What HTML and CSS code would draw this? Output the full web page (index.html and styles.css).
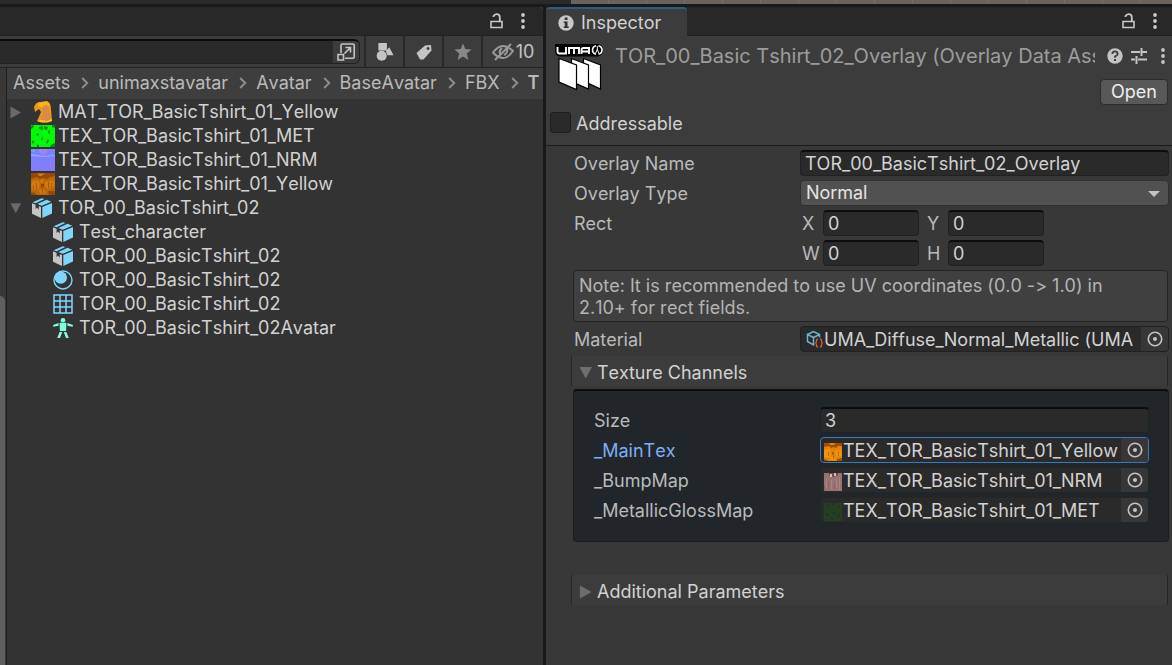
FILE: index.html
```html
<!DOCTYPE html>
<html lang="en">
<head>
  <meta charset="UTF-8">
  <meta name="viewport" content="width=device-width, initial-scale=1.0">
  <title>Unity Editor</title>
  <link rel="stylesheet" href="styles.css">
</head>
<body>
<!-- Shared icons -->
<svg class="sprite" aria-hidden="true">
  <symbol id="i-lock" viewBox="0 0 14 16">
    <path d="M1 8.500h11v6H1z" fill="none" stroke="currentColor" stroke-width="1.600"/>
    <path d="M3.500 4V3.200Q4.500 1.200 6.500 1.200q3.300 0 3.300 3V8" fill="none" stroke="currentColor" stroke-width="1.800"/>
  </symbol>
  <symbol id="i-dots" viewBox="0 0 4 16">
    <circle cx="2" cy="2" r="1.900"/><circle cx="2" cy="8" r="1.900"/><circle cx="2" cy="14" r="1.900"/>
  </symbol>
  <symbol id="i-chevron" viewBox="0 0 8 12">
    <path d="M1.200 1l5 5-5 5" fill="none" stroke="currentColor" stroke-width="2"/>
  </symbol>
  <symbol id="i-right" viewBox="0 0 12 14"><path d="M0 .5v13L11.500 7z"/></symbol>
  <symbol id="i-down" viewBox="0 0 14 12"><path d="M.5 0h12.500L6.700 11.500z"/></symbol>
  <symbol id="i-target" viewBox="0 0 16 16">
    <circle cx="8" cy="8" r="6.700" fill="none" stroke="currentColor" stroke-width="1.600"/>
    <circle cx="8" cy="8" r="2"/>
  </symbol>
  <symbol id="i-model" viewBox="0 0 20 20">
    <path d="M0 5.300l3.600 1.500v4.400l1.300-1.600 1.900 1.900V8l2.200 1v11L0 15.800z" fill="#c4c4c4"/>
    <path d="M10.300 9L20 5v10.600L10.300 20z" fill="#7fd6fd"/>
    <path d="M.7 4.200L9.800.2l2.600.8-8.800 4.200zM5.300 6L14.600 1.700l4.600 2.100-9.500 4z" fill="#7fd6fd"/>
  </symbol>
  <symbol id="i-material" viewBox="0 0 20 20">
    <circle cx="10" cy="10" r="9" fill="none" stroke="#7fd6fd" stroke-width="1.400"/>
    <circle cx="7.800" cy="7.600" r="6.200" fill="#7fd6fd"/>
  </symbol>
  <symbol id="i-mesh" viewBox="0 0 20 20">
    <path d="M1 1h18v18H1zM7 1v18M13 1v18M1 7h18M1 13h18" fill="none" stroke="#7fd6fd" stroke-width="1.500"/>
  </symbol>
  <symbol id="i-avatar" viewBox="0 0 20 20">
    <g fill="#80ffdf">
      <circle cx="10" cy="2.300" r="2.300"/>
      <path d="M6.600 4.800h6.800l-.3 8.200H6.900zM5.600 4.900v2.800L.4 8.800 0 6.900zM14.400 4.900v2.800l5.200 1.100.4-1.900zM6.600 13.900h2.700L7 20H4.200zM13.400 13.900h-2.700L13 20h2.800z"/>
    </g>
  </symbol>
  <symbol id="t-yellow" viewBox="0 0 24 22" preserveAspectRatio="none">
    <path d="M0 0h24v22H0z" fill="#b9660c"/>
    <path d="M0 0h6l2 2h5l1-2h10v3l-5 1-3 2-4-1-3 1-3-2-6 2zM10 11h3v2l-2 2-1-2zM0 19l4 1 2 2H0zM17 18h7v4h-6z" fill="#96480a"/>
    <path d="M1 8l6-1 2 3-1 6-5 1-3-2zM14 9l7-2 3 3-2 5-6 1-2-3zM7 17l6-1 2 4-5 1zM7 1h5l-1 2H8zM10 6l3 1-1 3-3-1z" fill="#d27a0b"/>
    <path d="M5 10h1v6H5zM17 9h1v6h-1zM20 10h1v5h-1zM11 15h1v5h-1zM2 12h1v4H2z" fill="#a85809"/>
  </symbol>
  <symbol id="t-bright" viewBox="0 0 18 18">
    <path d="M0 0h18v18H0z" fill="#e08604"/>
    <path d="M0 0h5l1 2h4l1-2h7v3h-4l-2 2-2-1-3 1-2-2-5 1zM8 9l2 1-1 2-1-1zM0 16l3 1 1 1H0zM13 16l5-1v3h-5z" fill="#a54d07"/>
    <path d="M0 7l6-1 1 4-2 5-5-1zM11 8l6-2 1 7-6 1zM6 14h5l1 3H7z" fill="#f0960a"/>
    <path d="M14 8h1v5h-1zM4 9h1v4H4zM9 12h1v4H9z" fill="#c26a05"/>
  </symbol>
  <symbol id="t-green" viewBox="0 0 24 22" preserveAspectRatio="none">
    <path d="M0 0h24v22H0z" fill="#00fb08"/>
    <path d="M0 1l2-1h1L2 3 0 4zM8 2l3-1 1 2-1 2-3-1zM13 1l4 1-1 3-3-1zM6 8l2 1-1 2-2-1zM17 6l2-1v3l-2 1zM21 0h3v3l-3-1zM2 15l1 2-1 2-1-2zM10 13l1-1 1 2-1 2zM15 17l2-3 1 2-2 3zM6 19l2 1v2H6zM20 20l4-2v4h-5z" fill="#068c0c"/>
  </symbol>
  <symbol id="t-met" viewBox="0 0 18 18">
    <path d="M0 0h18v18H0z" fill="#243f23"/>
    <path d="M2 1l3 1-2 3zM7 0h4L9 3zM14 2l3 1-3 2zM1 10l4 1-2 3zM9 8l3 2-3 2zM13 12l4-2-2 5zM6 14l4 1-2 2z" fill="#1f3520"/>
  </symbol>
  <symbol id="t-normal" viewBox="0 0 24 22" preserveAspectRatio="none">
    <path d="M0 0h24v22H0z" fill="#817efb"/>
    <path d="M0 5l7 1 6 1 11-1v1l-11 1L0 7z" fill="#8fa6fb"/>
    <path d="M8 0h8v4l-3 2-4-2z" fill="#9a88f7"/>
    <path d="M12 1h1v4h-1zM16 0h1v4h-1zM5 13h1v4H5zM19 12h1v6h-1z" fill="#a078ee"/>
    <path d="M0 0h4v3H0zM19 3l3 2-2 2z" fill="#739af3"/>
  </symbol>
  <symbol id="t-bump" viewBox="0 0 18 18">
    <path d="M0 0h18v18H0z" fill="#997272"/>
    <path d="M5 0h9v2l-4 2-5-2z" fill="#6b4849"/>
    <path d="M6 1h2v3H6zM10 0h2v3h-2z" fill="#dcb8b5"/>
    <path d="M2 5h1v10H2zM7 7h1v9H7zM12 6h1v9h-1zM15 4h1v13h-1z" fill="#a88483"/>
    <path d="M4 8h1v8H4zM10 9h1v7h-1zM0 12h1v6H0z" fill="#8a6465"/>
  </symbol>
</svg>

<div class="scene-strip"><div class="scene-grid"></div></div>

<main class="editor">
  <!-- Project window -->
  <section class="project">
    <div class="tabbar">
      <button class="icon-btn" title="Lock"><svg class="lock"><use href="#i-lock"/></svg></button>
      <button class="icon-btn" title="Menu"><svg class="dots"><use href="#i-dots"/></svg></button>
    </div>
    <div class="toolbar">
      <div class="search">
        <input type="text" aria-label="Search">
        <button title="Open in Search">
          <svg viewBox="0 0 18 18" class="ico18 line" stroke="currentColor" stroke-width="1.600">
            <path d="M4 10V2.500Q4 1 5.500 1H16q1.200 0 1.200 1.200V14q0 1.300-1.200 1.300H8"/>
            <path d="M1 11.500h5.500V17H1zM7.500 10.500L13 5M8.500 4.500h5v5"/>
          </svg>
        </button>
      </div>
      <button class="tool" title="Search by Type">
        <svg viewBox="0 0 18 19" class="ico18"><path d="M2 0h9v8H2z"/><circle cx="5.500" cy="13.500" r="5.300"/><path d="M13.500 4.500L18 13h-6.500L10 8.500z"/></svg>
      </button>
      <button class="tool" title="Search by Label">
        <svg viewBox="0 0 18 18" class="ico18"><path fill-rule="evenodd" d="M1.500 10L10 2.500l6-.5.500 5.500-8 9H5zM13 4a1.500 1.500 0 1 0 .1 0z"/></svg>
      </button>
      <button class="tool star" title="Save search">
        <svg viewBox="0 0 18 18" class="ico18"><path d="M9 .5l2.300 5.600 6.200.4-4.700 4 1.500 6.500L9 13.500 3.700 17l1.500-6.500-4.700-4 6.200-.4z"/></svg>
      </button>
      <button class="tool hidden-count" title="Hidden packages">
        <svg viewBox="0 0 22 18" class="line" stroke="currentColor" stroke-width="2"><path d="M1 9.500Q6 3 11 3t10 5q-5 7-10 7T1 9.500z"/><path d="M10 5q-4 3.500-1 7M12 12q4-2 3-6M3 17L19 1"/></svg>
        <span>10</span>
      </button>
    </div>
    <div class="project-body">
      <div class="folder-tree"><div class="scroll-thumb"></div></div>
      <div class="content">
        <nav class="breadcrumbs">
          <a href="#">Assets</a><svg><use href="#i-chevron"/></svg>
          <a href="#">unimaxstavatar</a><svg><use href="#i-chevron"/></svg>
          <a href="#">Avatar</a><svg><use href="#i-chevron"/></svg>
          <a href="#">BaseAvatar</a><svg><use href="#i-chevron"/></svg>
          <a href="#">FBX</a><svg><use href="#i-chevron"/></svg>
          <a href="#" class="current">T</a>
        </nav>
        <ul class="assets">
          <li>
            <svg class="fold"><use href="#i-right"/></svg>
            <svg class="thumb" viewBox="0 0 24 22"><path d="M3 6Q5 1 9 1l7-1q4 2 4 8l1 12q-8 3-15 0l4-9-2-3-4 3z" fill="#e8961c"/><path d="M11 7l4-2 3 3 1 11-4 1-5-1 2-6z" fill="#d98a4b"/><path d="M8 1.500L16 .5q3 2 3 5l-4-2-5 3-3-1z" fill="#f9b222"/><path d="M6 20q8 3 15 0l-.3-2L16 20l-6-1z" fill="#ffc02c"/></svg>
            <span>MAT_TOR_BasicTshirt_01_Yellow</span>
          </li>
          <li><i class="fold"></i><svg class="thumb"><use href="#t-green"/></svg><span>TEX_TOR_BasicTshirt_01_MET</span></li>
          <li><i class="fold"></i><svg class="thumb"><use href="#t-normal"/></svg><span>TEX_TOR_BasicTshirt_01_NRM</span></li>
          <li><i class="fold"></i><svg class="thumb"><use href="#t-yellow"/></svg><span>TEX_TOR_BasicTshirt_01_Yellow</span></li>
          <li><svg class="fold"><use href="#i-down"/></svg><svg class="type"><use href="#i-model"/></svg><span>TOR_00_BasicTshirt_02</span></li>
          <li class="sub"><svg class="type"><use href="#i-model"/></svg><span>Test_character</span></li>
          <li class="sub"><svg class="type"><use href="#i-model"/></svg><span>TOR_00_BasicTshirt_02</span></li>
          <li class="sub"><svg class="type"><use href="#i-material"/></svg><span>TOR_00_BasicTshirt_02</span></li>
          <li class="sub"><svg class="type"><use href="#i-mesh"/></svg><span>TOR_00_BasicTshirt_02</span></li>
          <li class="sub"><svg class="type"><use href="#i-avatar"/></svg><span>TOR_00_BasicTshirt_02Avatar</span></li>
        </ul>
      </div>
    </div>
  </section>

  <!-- Inspector window -->
  <section class="inspector">
    <div class="tabbar">
      <button class="tab">
        <svg viewBox="0 0 16 16"><circle cx="8" cy="8" r="7.700" fill="#c8c8c8"/><path d="M6.700 2.600h2.800v2.400H6.700zM5.700 6.400h3.800v5h1.200v1.700h-5v-1.700h1.100V8.100H5.700z" fill="#333"/></svg>
        Inspector
      </button>
      <button class="icon-btn" title="Lock"><svg class="lock"><use href="#i-lock"/></svg></button>
      <button class="icon-btn" title="Menu"><svg class="dots"><use href="#i-dots"/></svg></button>
    </div>

    <header class="asset-header">
      <div class="title-row">
        <svg class="uma" viewBox="0 0 48 48">
          <path d="M0 0h43q5 1 5 6t-5 6.500H5Q0 12 0 7z" fill="#000"/>
          <path d="M2.500 3v4.500q0 2 2 2H11V3M14 10V4h10v6M19 4v6M26.500 10V6q0-2 2-2H34v6M26.500 7.500H34" fill="none" stroke="#fff" stroke-width="1.900"/>
          <path d="M41 1.800q-3.500.8-3.500 4.200t3.500 4.200M43.500 1.800Q47 2.600 47 6t-3.500 4.200" fill="none" stroke="#fff" stroke-width="1.600"/>
          <path d="M42.300 2v4M40.500 9.500l1.800-4 1.800 4" stroke="#fff" fill="none"/>
          <path d="M28.500 14.500v22.500l17 8V21z" fill="#fff" stroke="#000" stroke-width="1.200"/>
          <path d="M16.500 14.500v23l17 7.500V21z" fill="#fff" stroke="#000" stroke-width="1.200"/>
          <path d="M4 14.500v23.500l17.500 7.500V21z" fill="#fff" stroke="#000" stroke-width="1.200"/>
        </svg>
        <h1>TOR_00_Basic Tshirt_02_Overlay (Overlay Data Asset)</h1>
        <div class="header-icons">
          <button class="icon-btn" title="Help"><svg class="help" viewBox="0 0 16 16"><circle cx="8" cy="8" r="7.700" fill="#c4c4c4"/><path d="M5.300 6q0-2.600 2.700-2.600T10.700 6Q10.700 7.300 8 8.500v1.300" fill="none" stroke="#3c3c3c" stroke-width="1.800"/><path d="M7 11h2v2H7z" fill="#3c3c3c"/></svg></button>
          <button class="icon-btn" title="Presets"><svg class="preset line" viewBox="0 0 16 16" stroke="currentColor" stroke-width="2"><path d="M0 4h9M11 4h5M10.500 0v8M0 11.500h4M7 11.500h9M5.500 8v8"/></svg></button>
          <button class="icon-btn" title="Menu"><svg class="dots"><use href="#i-dots"/></svg></button>
        </div>
      </div>
      <button class="open">Open</button>
      <label class="addressable"><input type="checkbox"> Addressable</label>
    </header>

    <form class="fields">
      <div class="row">
        <label for="overlayName">Overlay Name</label>
        <input class="box" id="overlayName" type="text" value="TOR_00_BasicTshirt_02_Overlay">
      </div>
      <div class="row">
        <label for="overlayType">Overlay Type</label>
        <div class="dropdown">
          <select id="overlayType"><option>Normal</option></select>
        </div>
      </div>
      <div class="row rect-row">
        <span class="name">Rect</span>
        <div class="rect">
          <label for="rx">X</label><input class="box" id="rx" type="text" value="0">
          <label for="ry">Y</label><input class="box" id="ry" type="text" value="0">
          <label for="rw">W</label><input class="box" id="rw" type="text" value="0">
          <label for="rh">H</label><input class="box" id="rh" type="text" value="0">
        </div>
      </div>
      <p class="note">Note: It is recommended to use UV coordinates (0.0 -&gt; 1.0) in 2.10+ for rect fields.</p>
      <div class="row">
        <label for="material">Material</label>
        <div class="box object">
          <svg class="so line" viewBox="0 0 18 18"><path d="M1.500 4.500L7.500 1.500l6 3v3M1.500 4.500v7l6 3.500V7.500zM7.500 7.500l6-3" stroke="#6bb3d3" stroke-width="1.500"/><path d="M12 9q-1.500 0-1.500 2t-1.300 2q1.300 0 1.300 2t1.500 2M14 9q1.500 0 1.500 2t1.300 2q-1.300 0-1.300 2t-1.500 2" stroke="#dd5730" stroke-width="1.400"/></svg>
          <input id="material" type="text" readonly value="UMA_Diffuse_Normal_Metallic (UMA Material)">
          <button type="button" title="Select"><svg><use href="#i-target"/></svg></button>
        </div>
      </div>

      <button type="button" class="foldout"><svg class="down"><use href="#i-down"/></svg>Texture Channels</button>
      <div class="channels">
        <div class="row">
          <label for="size">Size</label>
          <input class="box" id="size" type="text" value="3">
        </div>
        <div class="row selected">
          <label for="mainTex">_MainTex</label>
          <div class="box object">
            <svg class="tex"><use href="#t-bright"/></svg>
            <input id="mainTex" type="text" readonly value="TEX_TOR_BasicTshirt_01_Yellow">
            <button type="button" title="Select"><svg><use href="#i-target"/></svg></button>
          </div>
        </div>
        <div class="row">
          <label for="bumpMap">_BumpMap</label>
          <div class="box object">
            <svg class="tex"><use href="#t-bump"/></svg>
            <input id="bumpMap" type="text" readonly value="TEX_TOR_BasicTshirt_01_NRM">
            <button type="button" title="Select"><svg><use href="#i-target"/></svg></button>
          </div>
        </div>
        <div class="row">
          <label for="metallic">_MetallicGlossMap</label>
          <div class="box object">
            <svg class="tex"><use href="#t-met"/></svg>
            <input id="metallic" type="text" readonly value="TEX_TOR_BasicTshirt_01_MET">
            <button type="button" title="Select"><svg><use href="#i-target"/></svg></button>
          </div>
        </div>
      </div>

      <button type="button" class="foldout"><svg class="right"><use href="#i-right"/></svg>Additional Parameters</button>
    </form>
  </section>
</main>
</body>
</html>
```
FILE: styles.css
```css
/* Editor dark theme */
* {
  box-sizing: border-box;
}

body {
  margin: 0;
  min-height: 100vh;
  display: flex;
  flex-direction: column;
  background: #191919;
  color: #d2d2d2;
  font-family: Inter, sans-serif;
  font-size: 18px;
  line-height: 24px;
  font-kerning: none;
  font-optical-sizing: none;
  font-variant-ligatures: none;
  overflow: hidden;
}

button, input, select {
  font: inherit;
  font-kerning: none;
  font-optical-sizing: none;
  font-variant-ligatures: none;
  color: inherit;
  border: none;
  background: none;
  padding: 0;
  margin: 0;
  outline: none;
}

svg {
  display: block;
  flex: none;
  fill: currentColor;
}

.line {
  fill: none;
}

.sprite {
  position: absolute;
  width: 0;
  height: 0;
}

/* Bottom edge of the scene view above the two windows */
.scene-strip {
  height: 4px;
  background: #2a2a2a;
  padding-left: 571px;
}

.scene-grid {
  height: 4px;
  background: repeating-linear-gradient(90deg, #6b625b 0 37px, #766d66 37px 38px);
}

.editor {
  flex: 1;
  display: grid;
  grid-template-columns: 543fr 626fr;
  gap: 3px;
  padding-top: 3px;
}

.project, .inspector {
  min-width: 0;
  display: flex;
  flex-direction: column;
  background: #383838;
}

/* Window tab bars */
.tabbar {
  height: 29px;
  display: flex;
  align-items: center;
  justify-content: flex-end;
  gap: 17px;
  padding-right: 15px;
  background: #282828;
  border-bottom: 1px solid #222;
  color: #c8c8c8;
}

.project .tabbar {
  padding-right: 18px;
  border-radius: 0 5px 0 0;
}

.tab {
  height: 29px;
  display: flex;
  align-items: center;
  gap: 7px;
  margin: 0 auto -1px 0;
  padding: 0 26px 0 12px;
  background: #3c3c3c;
  border-top: 2px solid #2c5d87;
  border-radius: 4px 4px 0 0;
  color: #d2d2d2;
}

.tab svg {
  width: 16px;
  height: 16px;
}

.lock {
  width: 14px;
  height: 16px;
}

.dots {
  width: 4px;
  height: 16px;
}

/* Project toolbar */
.toolbar {
  height: 32px;
  display: flex;
  background: #3c3c3c;
  border-bottom: 1px solid #232323;
}

.search {
  flex: 1;
  min-width: 0;
  height: 25px;
  margin: 3px 4px 0 0;
  display: flex;
  background: #2a2a2a;
  border: 1px solid #222;
  border-top: 2px solid #0d0d0d;
  border-left: none;
  border-radius: 0 6px 6px 0;
  overflow: hidden;
}

.search input {
  flex: 1;
  min-width: 0;
}

.search button {
  width: 26px;
  display: grid;
  place-items: center;
  background: #3c3c3c;
  color: #c4c4c4;
}

.ico18 {
  width: 18px;
  height: 18px;
}

.tool {
  width: 39px;
  display: flex;
  align-items: center;
  justify-content: center;
  border-left: 2px solid #282828;
  color: #c4c4c4;
}

.star {
  color: #888;
}

.hidden-count {
  width: 62px;
  gap: 2px;
}

.hidden-count svg {
  width: 22px;
  height: 18px;
  color: #999;
}

/* Project contents */
.project-body {
  flex: 1;
  display: flex;
}

.folder-tree {
  width: 7px;
  padding-top: 228px;
  display: flex;
  border-right: 1px solid #1e1e1e;
}

.scroll-thumb {
  width: 5px;
  background: #5f5f5f;
  border-radius: 0 5px 0 0;
}

.content {
  flex: 1;
  min-width: 0;
  background: #333;
}

.breadcrumbs {
  height: 31px;
  display: flex;
  align-items: center;
  padding: 0 0 2px 6px;
  background: #3e3e3e;
}

.breadcrumbs a {
  color: #bababa;
  text-decoration: none;
}

.breadcrumbs .current {
  font-weight: 600;
}

.breadcrumbs svg {
  width: 8px;
  height: 12px;
  margin: 0 9px 0 11px;
  color: #8c8c8c;
}

.assets {
  margin: 0;
  padding: 1px 0 0 3px;
  list-style: none;
}

.assets li {
  height: 24px;
  display: flex;
  align-items: center;
  gap: 3px;
}

.fold {
  width: 12px;
  height: 13px;
  margin-right: 6px;
  color: #6a6a6a;
}

.thumb {
  width: 24px;
  height: 22px;
}

.type {
  width: 20px;
  height: 20px;
  margin: 0 3px 0 1px;
}

.assets .sub {
  padding-left: 42px;
}

/* Inspector header */
.asset-header {
  height: 110px;
  padding: 8px 4px 0;
  background: #3c3c3c;
  border-bottom: 1px solid #1a1a1a;
}

.title-row {
  height: 35px;
  display: flex;
  gap: 12px;
  padding-left: 5px;
}

.uma {
  width: 48px;
  height: 48px;
}

.asset-header h1 {
  flex: 1;
  min-width: 0;
  margin: 0;
  font-size: 20px;
  font-weight: 400;
  color: #9c9c9c;
  white-space: nowrap;
  overflow: hidden;
}

.header-icons {
  height: 24px;
  display: flex;
  align-items: center;
  gap: 8px;
  margin-right: 3px;
  color: #c4c4c4;
}

.header-icons .dots {
  margin-left: 6px;
}

.help, .preset {
  width: 16px;
  height: 16px;
}

.open {
  display: block;
  width: 68px;
  height: 26px;
  margin-left: auto;
  background: #585858;
  border: 1px solid #2c2c2c;
  border-radius: 4px;
  color: #eee;
}

.addressable {
  display: flex;
  align-items: center;
  gap: 5px;
  height: 24px;
  margin-top: 7px;
}

.addressable input {
  appearance: none;
  width: 21px;
  height: 21px;
  margin-bottom: 4px;
  background: #2a2a2a;
  border: 1px solid #1e1e1e;
  border-radius: 3px;
}

/* Inspector fields */
.fields {
  padding: 4px 3px 0 28px;
}

.row {
  display: grid;
  grid-template-columns: 226px 1fr;
  margin-bottom: 4px;
  align-items: center;
  color: #bababa;
}

.row label, .name {
  padding-top: 2px;
}

.box {
  width: 100%;
  min-width: 0;
  height: 26px;
  padding-left: 4px;
  background: #2a2a2a;
  border: 1px solid #212121;
  border-top: 2px solid #0d0d0d;
  border-radius: 4px;
  color: #d2d2d2;
}

.dropdown {
  position: relative;
  height: 26px;
}

.dropdown select {
  appearance: none;
  width: 100%;
  height: 26px;
  padding-left: 5px;
  background: #515151;
  border: 1px solid #303030;
  border-radius: 4px;
  color: #e4e4e4;
}

.dropdown::after {
  content: "";
  position: absolute;
  right: 9px;
  top: 11px;
  border: 6px solid transparent;
  border-top-color: #c4c4c4;
  border-bottom: none;
}

.rect-row {
  align-items: start;
}

.rect {
  display: grid;
  grid-template-columns: 19px 96px 21px 96px;
  gap: 4px;
}

.rect label {
  padding-left: 2px;
}

.rect label:nth-of-type(even) {
  padding-left: 4px;
}

.note {
  margin: 0 1px 4px -1px;
  padding: 4px 24px 2px 5px;
  background: #404040;
  border: 1px solid #232323;
  border-radius: 4px;
  line-height: 22px;
  color: #b4b4b4;
}

.object {
  display: flex;
  align-items: center;
  padding-left: 2px;
  border-top: 1px solid #212121;
}

.object input {
  flex: 1;
  min-width: 0;
  padding: 2px 0 0;
  margin-right: 3px;
}

.object button {
  width: 27px;
  height: 24px;
  display: grid;
  place-items: center;
  background: #373737;
  border-radius: 0 3px 3px 0;
  color: #c4c4c4;
}

.object button svg {
  width: 16px;
  height: 16px;
}

.so {
  width: 18px;
  height: 18px;
  margin-left: 3px;
}

.tex {
  width: 18px;
  height: 18px;
  margin: 3px 1px 0;
}

.foldout {
  width: calc(100% + 2px);
  height: 30px;
  display: flex;
  align-items: center;
  gap: 4px;
  margin-left: -3px;
  padding: 4px 0 0 7px;
  background: #3c3c3c;
  border: solid #262626;
  border-width: 0 1px;
  color: #d2d2d2;
}

.foldout .down {
  width: 14px;
  height: 12px;
  color: #6e6e6e;
}

.foldout .right {
  width: 12px;
  height: 14px;
  margin: 0 1px;
  color: #6e6e6e;
}

/* Texture channel list */
.channels {
  margin: 3px 0 33px -1px;
  padding: 16px 19px 14px 20px;
  background: #20262a;
  border: 1px solid #191d20;
  border-top: 2px solid #0d0d0d;
  border-radius: 4px;
}

.channels .object {
  border-color: #242628;
}

.channels .selected .box {
  border-color: #3a79bb;
}

.selected label {
  color: #7faef8;
}
```
